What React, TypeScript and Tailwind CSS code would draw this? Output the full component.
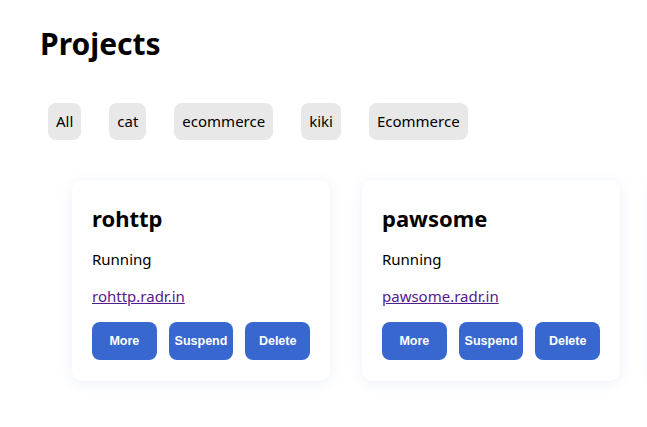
const tags = ["All", "cat", "ecommerce", "kiki", "Ecommerce"];

const projects = [
  { name: "rohttp", status: "Running", url: "rohttp.radr.in" },
  { name: "pawsome", status: "Running", url: "pawsome.radr.in" },
];

const ProjectCard = ({ name, status, url }: { name: string; status: string; url: string }) => {
  return (
    <div className="w-[258px] h-[201px] shrink-0 rounded-[10px] bg-white px-5 pt-[22px] shadow-[0_2px_14px_rgba(70,110,200,0.10)]">
      <h2 className="text-[22px] font-bold leading-[32px] text-black">{name}</h2>
      <p className="mt-[14px] text-[15px] leading-[22px] text-black">{status}</p>
      <a href="#" className="mt-[15px] block text-[15px] leading-[22px] text-[#551a8b] underline">
        {url}
      </a>
      <div className="mt-[15px] flex gap-3">
        {["More", "Suspend", "Delete"].map((b) => (
          <button
            key={b}
            className="h-[38px] w-[65px] rounded-[8px] bg-[#3867d0] font-['Liberation_Sans',sans-serif] text-[12.5px] font-semibold text-white"
          >
            {b}
          </button>
        ))}
      </div>
    </div>
  );
}

export default function App() {
  return (
    <div className="h-[427px] w-[647px] overflow-hidden bg-white font-['Noto_Sans',sans-serif] text-black">
      <div className="pl-10 pt-[22px]">
        <h1 className="text-[30px] font-bold leading-[44px]">Projects</h1>
        <div className="mt-[37px] flex gap-7 pl-2">
          {tags.map((t) => (
            <span key={t} className="flex h-[37px] items-center rounded-[8px] bg-[#e8e8e8] px-2 text-[15px]">
              {t}
            </span>
          ))}
        </div>
        <div className="mt-10 flex gap-8 pl-8">
          {projects.map((p) => (
            <ProjectCard key={p.name} {...p} />
          ))}
          <div className="w-[258px] h-[201px] shrink-0 rounded-[10px] bg-white shadow-[0_2px_14px_rgba(70,110,200,0.10)]" />
        </div>
      </div>
    </div>
  );
}
